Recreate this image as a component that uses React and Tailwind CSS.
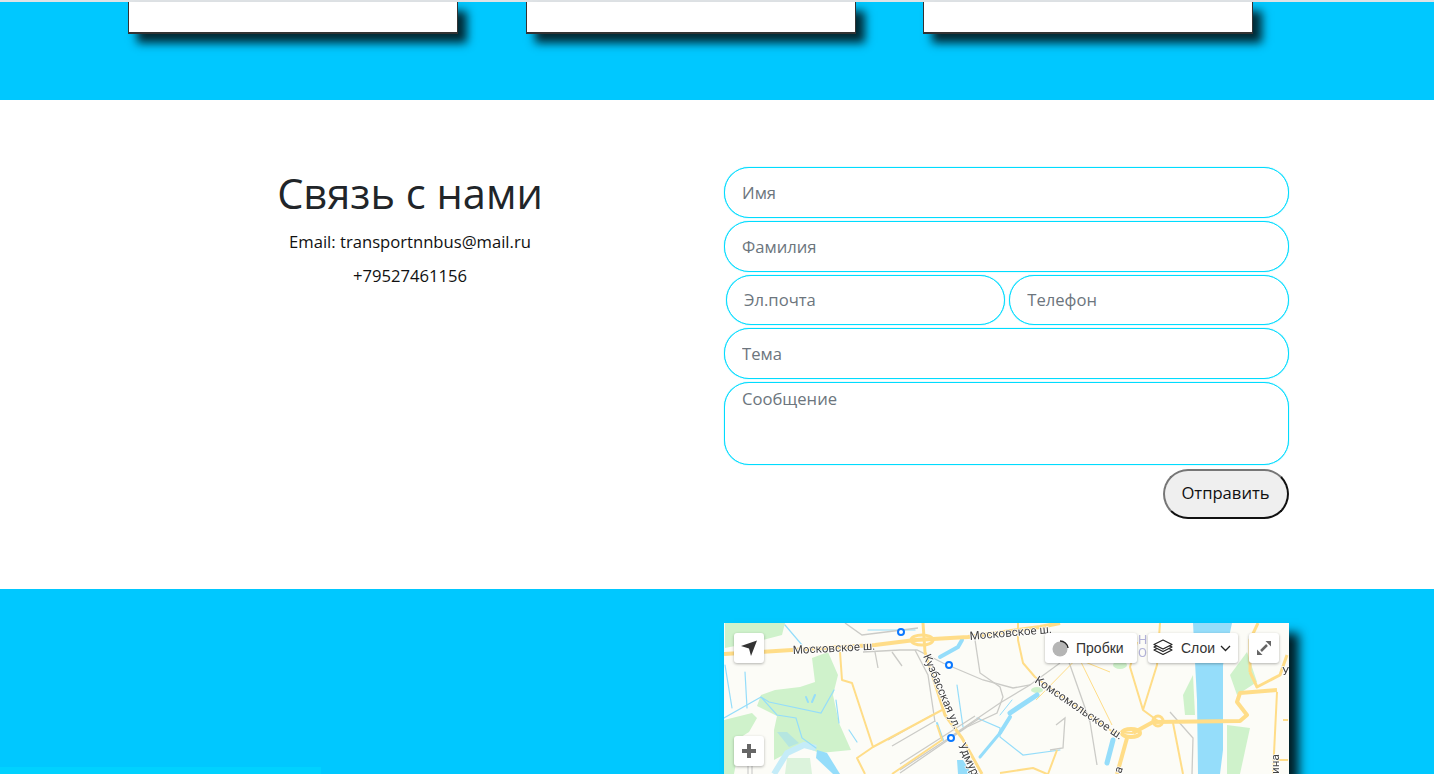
const cardClass = 'h-[32px] w-[330px] bg-white border-x border-b-2 border-[#333] shadow-[9px_9px_9px_rgba(0,0,0,0.8)]';
const inputClass =
  'h-[50.75px] w-full rounded-[25px] border border-[#00dcff] bg-white px-[17px] text-[16.64px] text-[#495057] outline-none shadow-[0_0_1px_#00dcff] placeholder:text-[#6c757d]';
const controlClass = 'flex h-[30px] items-center rounded-[3px] bg-white shadow-[0_1px_3px_rgba(0,0,0,0.3)]';

function MapLayer() {
  return (
    <svg viewBox="724 623 564.5 151" className="block h-[151px] w-[564.5px] blur-[0.35px]" fontFamily="Roboto, sans-serif">
      <rect x="724" y="623" width="565" height="151" fill="#fcfcf7" />
      {/* green areas */}
      <g fill="#cff2cb">
        <path d="M761 695L775 690L800 687L815 682L812 658L828 652L838 675L833 695L839 723L851 750L820 753L804 747L787 753L774 760L774 730L777 716L757 706Z" />
        <path d="M725 623H785L782 635L755 642L725 648Z" />
        <path d="M724 720L752 713L757 718L749 732L741 737L734 774H724Z" />
        <path d="M1183 695L1193 675L1195 715L1185 715Z" />
        <path d="M1227 725L1250 728L1240 774H1227Z" />
        <path d="M1230 675L1247 652L1257 682L1237 695Z" />
        <ellipse cx="1120" cy="665" rx="7" ry="4" />
        <ellipse cx="1037" cy="690" rx="6" ry="3" />
      </g>
      {/* water */}
      <path d="M787 758H810L812 774H785Z" fill="#dcf3dc" />
      <path d="M777 732H787L799 743L789 747Z" fill="#b5e6e0" />
      <path d="M774 774L787 753L804 745L816 748" fill="none" stroke="#c5ecf8" strokeWidth="6" />
      <g fill="#95ddfa">
        <path d="M1193 623H1232L1223 665V750L1220 774H1198L1197 700Z" />
        <path d="M817 750L827 753L840 774H833L816 758Z" />
        <path d="M957 760H963L968 768L972 774H958Z" />
      </g>
      <g fill="none" stroke="#95ddfa" strokeLinecap="round">
        <path d="M1037 695L1010 713" strokeWidth="5" />
        <path d="M1010 717L1000 733" strokeWidth="4" />
        <path d="M1000 733L980 757" strokeWidth="3" />
        <path d="M1113 740L1107 763" strokeWidth="5" />
        <path d="M940 657L958 647L962 640" strokeWidth="4" />
        <path d="M1000 715L1012 700" strokeWidth="1" />
        <path d="M724 718L761 697L777 715L796 718L802 738L816 748M761 697L769 702L821 713L834 690" strokeWidth="1.2" />
        <path d="M725 665L732 708M745 672L747 708M785 625L802 645" strokeWidth="1.2" />
        <path d="M836 700L839 723M849 730L857 742M868 630L915 630" strokeWidth="1.2" />
        <path d="M806 697L808 702M815 695L812 702" strokeWidth="2" />
        <path d="M957 685L963 727M977 718L1000 728L1000 737L1023 755L1060 750" strokeWidth="1.2" />
        <path d="M937 723L943 740" strokeWidth="2" />
      </g>
      {/* rail and small roads */}
      <g fill="none" stroke="#cbcbc7" strokeWidth="1.3">
        <path d="M845 623L862 635L918 628" />
        <path d="M863 652L900 650L917 650L943 663L983 680L1013 688L1030 685L1060 663" />
        <path d="M875 652L878 668M892 652L902 666" />
        <path d="M915 650L928 675L935 722" />
        <path d="M975 640L980 673L1000 687L1003 697L997 713L967 727L900 773" />
        <path d="M1030 685L1000 703L950 737" />
        <path d="M900 770L980 718M900 764L975 716M888 740L932 715M892 746L935 721" />
        <path d="M1070 665L1090 722L1097 765M1170 712L1193 738L1192 774" />
        <path d="M1060 640L1070 665" />
        <path d="M1056 725L1065 718L1063 748L1050 750" />
      </g>
      {/* roads */}
      <g fill="none" stroke="#ffdd88" strokeWidth="3" strokeLinejoin="round">
        <path d="M724 654L792 650L875 645L915 640L968 637L1040 627L1060 623" strokeWidth="4" />
        <path d="M923 623L925 652L945 715L962 738L982 774" />
        <path d="M840 652L842 680L852 683L873 747L942 710" strokeWidth="2" />
        <path d="M865 774L857 758L873 747M892 774L942 740L937 725" strokeWidth="2" />
        <path d="M1018 623L1018 640L1023 663L1035 677L1060 695L1113 732L1133 733" strokeWidth="2" />
        <path d="M1000 773L1033 768L1047 774M1057 750L1048 774" strokeWidth="2" />
        <path d="M1133 733L1153 722L1240 721L1247 715L1237 702L1240 693L1277 690" strokeWidth="4" />
        <path d="M1127 738L1117 774" strokeWidth="4" />
        <path d="M1137 642L1130 667L1143 710L1157 665L1160 623M1143 710L1158 721" strokeWidth="2" />
        <path d="M1173 723L1183 774" strokeWidth="2" />
        <path d="M1250 672L1257 687L1280 675L1287 655M1258 623L1250 640L1250 672" strokeWidth="3" />
        <path d="M1277 692L1273 774M1277 760H1288M1283 720H1288" strokeWidth="2" />
        <path d="M1112 725L1080 660L1110 672M1036 700L1095 640" strokeWidth="1" />
        <circle cx="1158" cy="721" r="5" />
        <ellipse cx="922" cy="640" rx="11" ry="5" />
        <ellipse cx="1131" cy="733" rx="9" ry="4" strokeWidth="4" />
      </g>
      {/* bus stops */}
      <g fill="#fff" stroke="#0a78ff" strokeWidth="2">
        <circle cx="901" cy="632" r="3" />
        <circle cx="949" cy="665" r="3" />
        <circle cx="951" cy="738" r="3" />
      </g>
      {/* labels */}
      <g fill="#444" fontSize="11.6" stroke="#fff" strokeWidth="1.5" paintOrder="stroke">
        <text x="793" y="654" transform="rotate(-3 793 654)">Московское ш.</text>
        <text x="970" y="640" transform="rotate(-5 970 640)">Московское ш.</text>
        <text x="923" y="656" transform="rotate(67 923 656)">Кузбасская ул.</text>
        <text x="958" y="745" transform="rotate(65 958 745)">Удмуртская</text>
        <text x="1034" y="682" transform="rotate(34 1034 682)">Комсомольское ш.</text>
        <text x="1279" y="774" transform="rotate(-90 1279 774)">ина</text>
        <text x="1121" y="774" transform="rotate(-70 1121 774)">а</text>
        <text x="1282" y="675">У</text>
      </g>
      <g fill="#b3b3d8" fontSize="13" stroke="none">
        <text x="1138" y="644">Н</text>
        <text x="1138" y="657">О</text>
      </g>
      <path d="M748 765V774M752 765V774" stroke="#c4c4c4" strokeWidth="1" />
    </svg>
  );
}

function MapBlock() {
  return (
    <div className="relative h-[151px] w-[564.5px] bg-[#fcfcf7] shadow-[10px_10px_10px_rgba(0,0,0,0.85)]">
      <MapLayer />
      <button type="button" className={`${controlClass} absolute left-[10px] top-[10px] w-[30px] justify-center`}>
        <svg width="18" height="18" viewBox="0 0 18 18">
          <path d="M1 7L17 1.5L11 17L9 9.5Z" fill="#333" />
        </svg>
      </button>
      <button type="button" className={`${controlClass} absolute left-[10px] top-[113px] w-[30px] justify-center`}>
        <svg width="16" height="16" viewBox="0 0 16 16">
          <path d="M6 1H10V6H15V10H10V15H6V10H1V6H6Z" fill="#666" />
        </svg>
      </button>
      <button
        type="button"
        className={`${controlClass} absolute left-[321px] top-[10px] w-[92px] gap-[7px] pl-[7px] font-['Liberation_Sans',sans-serif] text-[14px] text-[#333]`}
      >
        <svg width="17" height="17" viewBox="0 0 17 17">
          <circle cx="8" cy="9" r="7.5" fill="#b5b5b5" />
          <path d="M8 1C12 1 15.5 4 16 8" fill="none" stroke="#222" strokeWidth="1.5" />
        </svg>
        Пробки
      </button>
      <button
        type="button"
        className={`${controlClass} absolute left-[424px] top-[10px] w-[90px] gap-[8px] pl-[5px] font-['Liberation_Sans',sans-serif] text-[14px] text-[#333]`}
      >
        <svg width="20" height="18" viewBox="0 0 20 18" fill="#fff" stroke="#222" strokeWidth="1.2" strokeLinejoin="round">
          <path d="M1 11L10 15.5L19 11L10 6.5Z" />
          <path d="M1 8L10 12.5L19 8L10 3.5Z" />
          <path d="M1 5.5L10 10L19 5.5L10 1Z" />
        </svg>
        Слои
        <svg width="11" height="7" viewBox="0 0 11 7" className="-ml-[3px]">
          <path d="M1 1L5.5 5.5L10 1" fill="none" stroke="#222" strokeWidth="1.3" />
        </svg>
      </button>
      <button type="button" className={`${controlClass} absolute left-[525px] top-[10px] w-[30px] justify-center`}>
        <svg width="16" height="16" viewBox="0 0 16 16" fill="#666">
          <path d="M9.5 1H15V6.5Z" />
          <path d="M1 9.5V15H6.5Z" />
          <path d="M5 11L11 5" stroke="#666" strokeWidth="2.5" />
        </svg>
      </button>
    </div>
  );
}

export default function App() {
  return (
    <div className="relative h-[774px] overflow-hidden bg-white font-['Open_Sans',sans-serif] text-[#212529]">
      <section className="h-[100px] border-t-2 border-[#dfe3e6] bg-[#00c8ff]">
        <div className="flex gap-[67.5px] pl-[128px]">
          <div className={cardClass}></div>
          <div className={cardClass}></div>
          <div className={cardClass}></div>
        </div>
      </section>

      <section className="grid h-[489px] grid-cols-[564px_564.5px] gap-[32px] pl-[128px] pt-[67px]">
        <div className="text-center">
          <h2 className="mb-[10px] mt-[-1px] text-[41.6px] leading-[54px]">Связь с нами</h2>
          <p className="mb-[8px] text-[16.64px] leading-[24px] text-[#111]">Email: transportnnbus@mail.ru</p>
          <p className="pt-[2px] text-[16.64px] leading-[24px] text-[#111]">+79527461156</p>
        </div>
        <form className="flex flex-col gap-[3px]">
          <input className={inputClass} placeholder="Имя" />
          <input className={inputClass} placeholder="Фамилия" />
          <div className="flex gap-[4px] pl-[2px]">
            <input className={inputClass} placeholder="Эл.почта" />
            <input className={inputClass} placeholder="Телефон" />
          </div>
          <input className={inputClass} placeholder="Тема" />
          <textarea
            className="h-[82.5px] w-full resize-none rounded-[25px] border border-[#00dcff] bg-white px-[17px] py-[4px] text-[16.64px] text-[#495057] outline-none shadow-[0_0_1px_#00dcff] placeholder:text-[#6c757d]"
            placeholder="Сообщение"
          ></textarea>
          <div className="mt-[1px] flex justify-end">
            <button
              type="button"
              className="h-[50px] w-[126px] rounded-[25px] border-2 border-t-[#767676] border-r-[#111] border-b-[#111] border-l-[#767676] bg-[#efefef] text-[16.64px] text-[#111]"
            >
              Отправить
            </button>
          </div>
        </form>
      </section>

      <section className="grid h-[185px] grid-cols-[564px_564.5px] gap-[32px] bg-[#00c8ff] pl-[128px] pt-[34px]">
        <div></div>
        <MapBlock />
      </section>

      <div className="absolute bottom-0 left-0 h-[7px] w-[321px] bg-[#00d2ff]"></div>
    </div>
  );
}
